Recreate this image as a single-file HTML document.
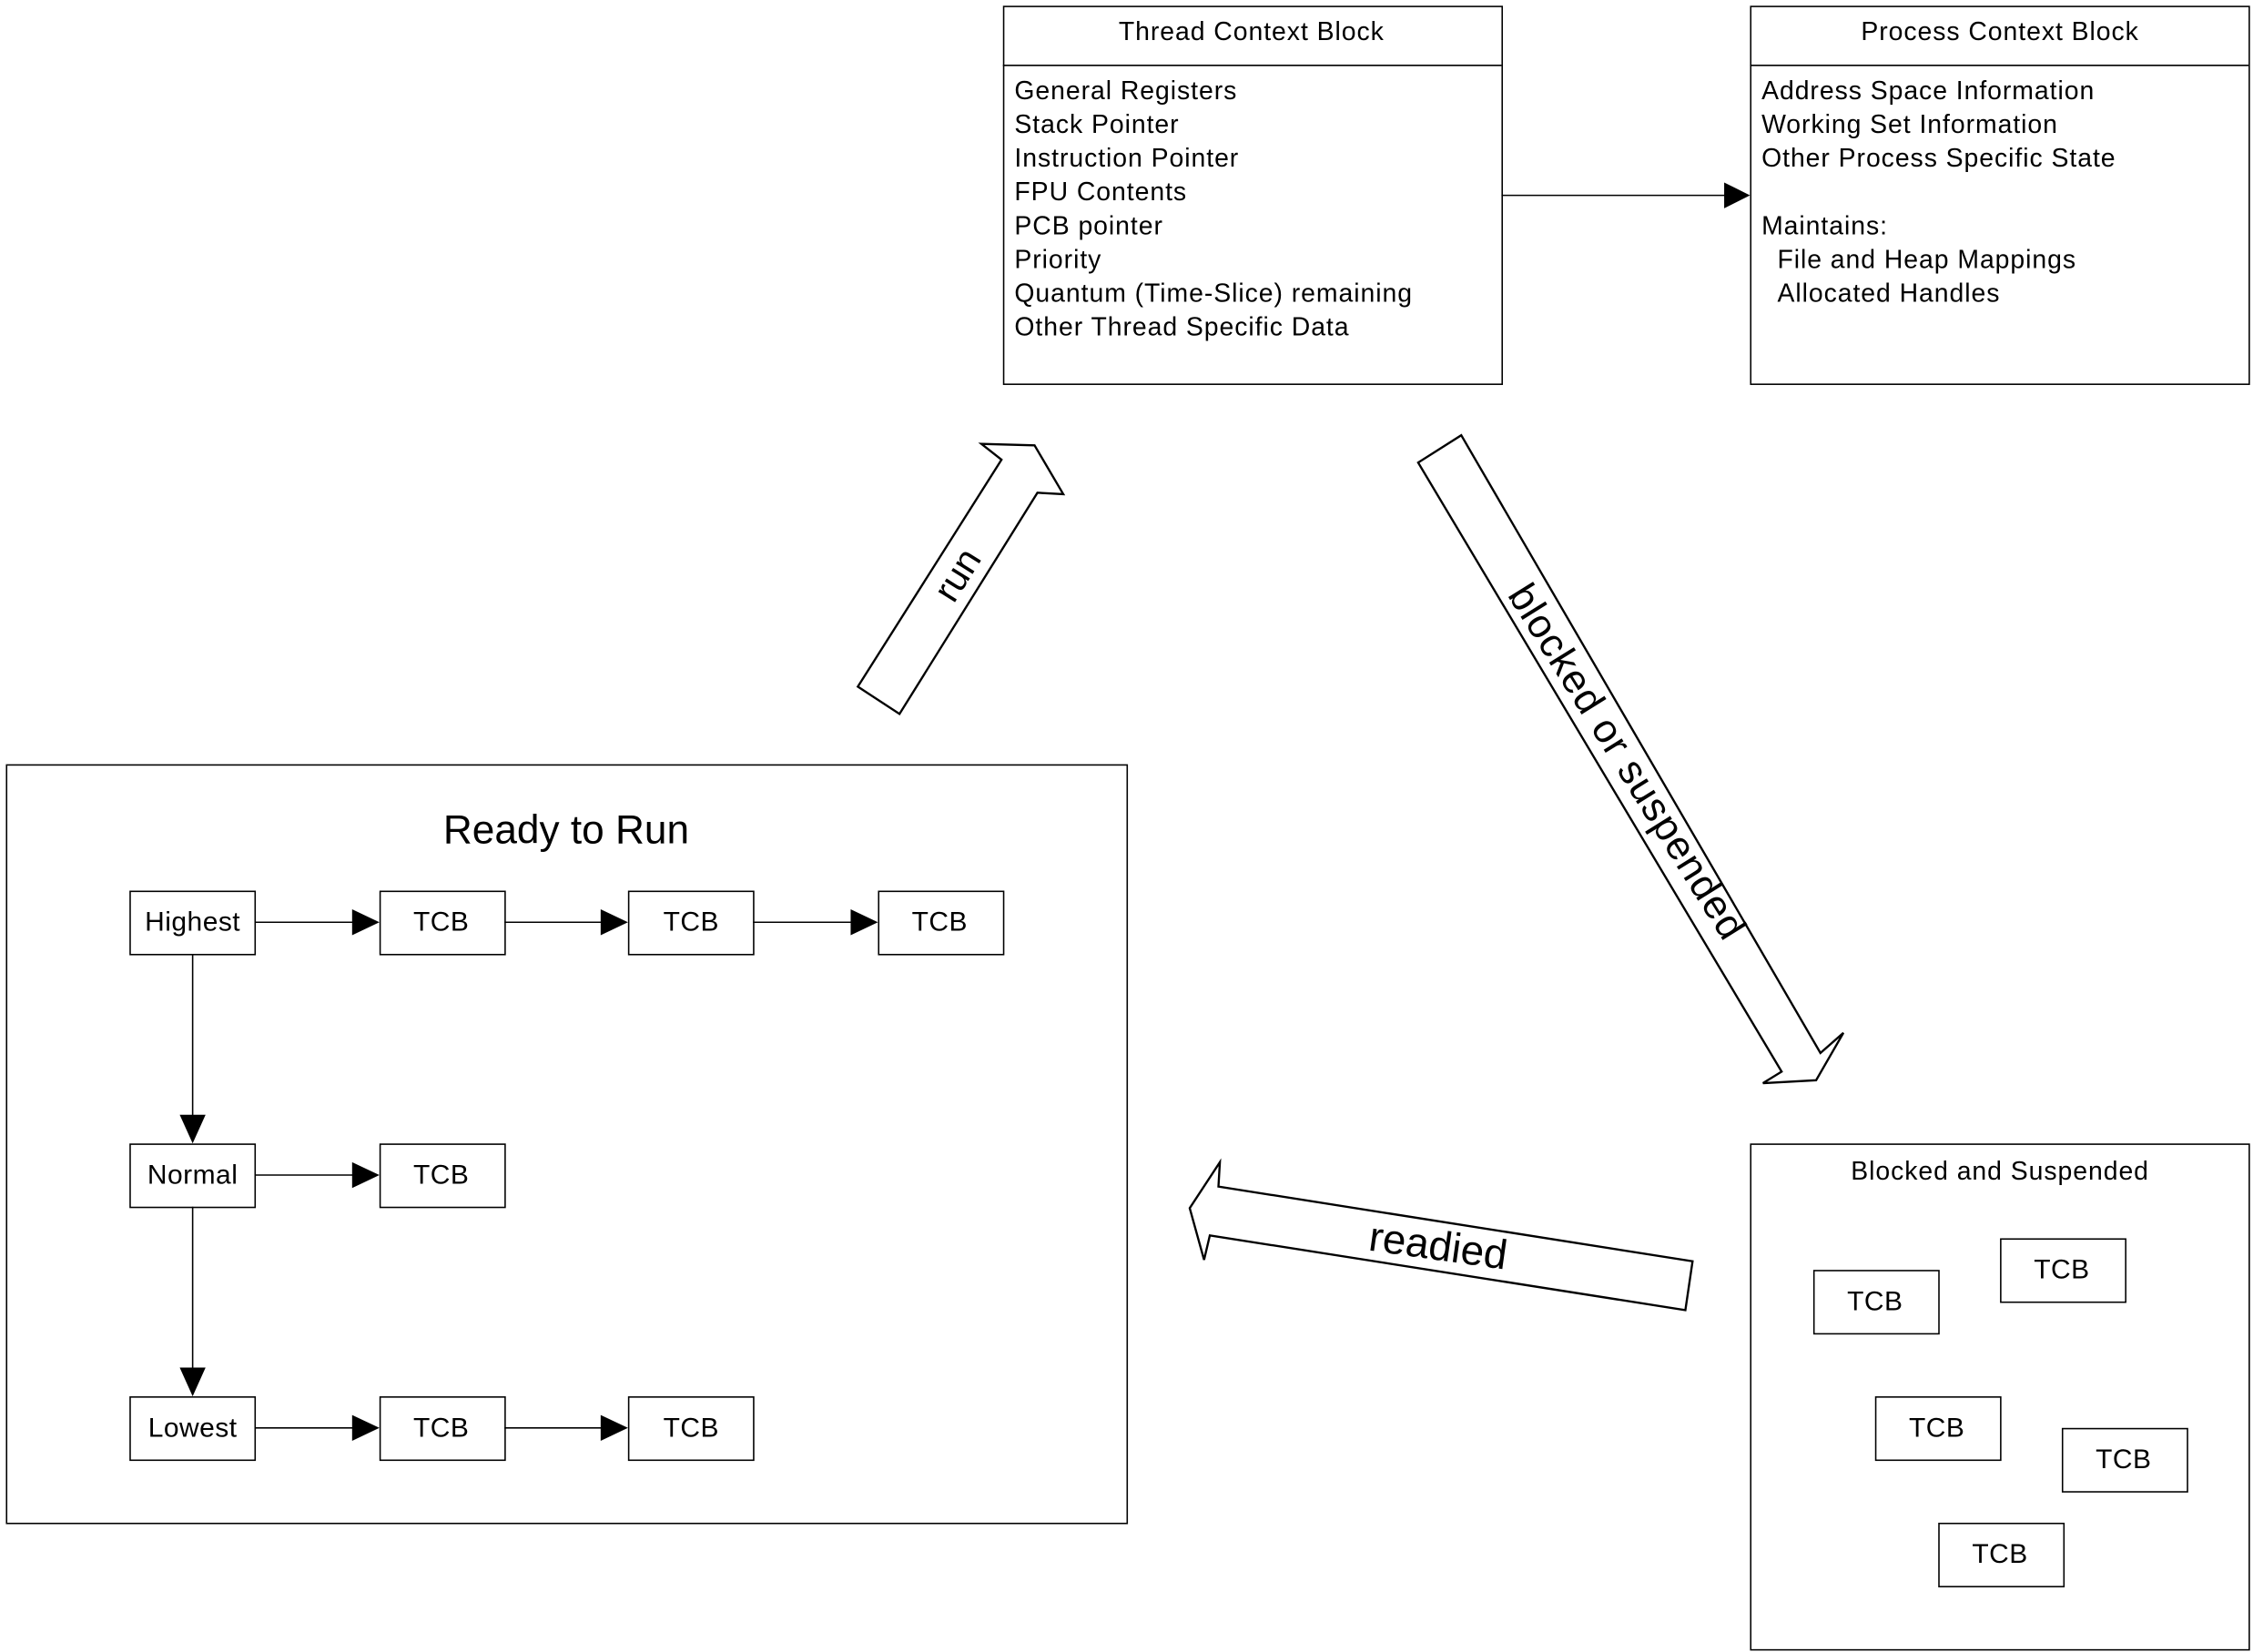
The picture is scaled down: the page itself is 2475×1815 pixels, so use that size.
<!DOCTYPE html><html><head><style>html,body{margin:0;padding:0;background:#fff}svg{display:block}text{font-family:"Liberation Sans",Arial,sans-serif;fill:#000}</style></head><body>
<svg width="2475" height="1815" viewBox="0 0 1568 1150" xmlns="http://www.w3.org/2000/svg">
<g fill="none" stroke="#000" stroke-width="1">
<rect x="698.5" y="4.5" width="347" height="263"/><line x1="698" y1="45.5" x2="1045" y2="45.5"/>
<rect x="1218.5" y="4.5" width="347" height="263"/><line x1="1218" y1="45.5" x2="1565" y2="45.5"/>
<line x1="1045" y1="136" x2="1202" y2="136"/>
<rect x="4.5" y="532.5" width="780" height="528"/>
<rect x="1218.5" y="796.5" width="347" height="352"/>
<rect x="90.5" y="620.5" width="87" height="44"/><rect x="264.5" y="620.5" width="87" height="44"/><rect x="437.5" y="620.5" width="87" height="44"/><rect x="611.5" y="620.5" width="87" height="44"/>
<rect x="90.5" y="796.5" width="87" height="44"/><rect x="264.5" y="796.5" width="87" height="44"/>
<rect x="90.5" y="972.5" width="87" height="44"/><rect x="264.5" y="972.5" width="87" height="44"/><rect x="437.5" y="972.5" width="87" height="44"/>
<rect x="1262.5" y="884.5" width="87" height="44"/><rect x="1392.5" y="862.5" width="87" height="44"/><rect x="1305.5" y="972.5" width="87" height="44"/><rect x="1435.5" y="994.5" width="87" height="44"/><rect x="1349.5" y="1060.5" width="87" height="44"/>
<line x1="177" y1="642" x2="248" y2="642"/><line x1="351" y1="642" x2="421" y2="642"/><line x1="524" y1="642" x2="595" y2="642"/>
<line x1="177" y1="818" x2="248" y2="818"/>
<line x1="177" y1="994" x2="248" y2="994"/><line x1="351" y1="994" x2="421" y2="994"/>
<line x1="134" y1="664" x2="134" y2="780"/><line x1="134" y1="840" x2="134" y2="956"/>
<polygon stroke-width="1.5" points="597,478 626,497 722,343 740,344 720,310 683,309 697,320"/>
<polygon stroke-width="1.5" points="987,322 1017,303 1267,733 1283,719 1264,752 1227,754 1240,746"/>
<polygon stroke-width="1.5" points="1178,878 1173,912 842,860 838,877 828,841 849,809 848,826"/>
</g>
<g fill="#000">
<polygon points="1200,127 1218,136 1200,145"/>
<polygon points="245,633 264,642 245,651"/><polygon points="418,633 437,642 418,651"/><polygon points="592,633 611,642 592,651"/>
<polygon points="245,809 264,818 245,827"/>
<polygon points="245,985 264,994 245,1003"/><polygon points="418,985 437,994 418,1003"/>
<polygon points="125,776 143,776 134,796"/><polygon points="125,952 143,952 134,972"/>
</g>
<g font-size="18" letter-spacing="0.6">
<text x="871" y="28" text-anchor="middle">Thread Context Block</text>
<text x="1392" y="28" text-anchor="middle">Process Context Block</text>
<text x="706" y="69">General Registers</text><text x="706" y="92.5">Stack Pointer</text><text x="706" y="116">Instruction Pointer</text><text x="706" y="139.5">FPU Contents</text><text x="706" y="163">PCB pointer</text><text x="706" y="186.5">Priority</text><text x="706" y="210">Quantum (Time-Slice) remaining</text><text x="706" y="233.5">Other Thread Specific Data</text>
<text x="1226" y="69">Address Space Information</text><text x="1226" y="92.5">Working Set Information</text><text x="1226" y="116">Other Process Specific State</text><text x="1226" y="163">Maintains:</text><text x="1237" y="186.5">File and Heap Mappings</text><text x="1237" y="210">Allocated Handles</text>
<text x="1392" y="821" text-anchor="middle">Blocked and Suspended</text>
</g>
<text x="394" y="587" font-size="28" text-anchor="middle">Ready to Run</text>
<g font-size="19" text-anchor="middle" letter-spacing="0.3">
<text x="134" y="648">Highest</text><text x="307" y="648">TCB</text><text x="481" y="648">TCB</text><text x="654" y="648">TCB</text>
<text x="134" y="824">Normal</text><text x="307" y="824">TCB</text>
<text x="134" y="1000">Lowest</text><text x="307" y="1000">TCB</text><text x="481" y="1000">TCB</text>
<text x="1305" y="912">TCB</text><text x="1435" y="890">TCB</text><text x="1348" y="1000">TCB</text><text x="1478" y="1022">TCB</text><text x="1392" y="1088">TCB</text>
</g>
<text transform="translate(666,400) rotate(-58)" font-size="26" text-anchor="middle" dy="9">run</text>
<text transform="translate(1133,530) rotate(58)" font-size="28" letter-spacing="0.6" text-anchor="middle" dy="10">blocked or suspended</text>
<text transform="translate(1001,867) rotate(8)" font-size="29" text-anchor="middle" dy="10">readied</text>
</svg></body></html>
